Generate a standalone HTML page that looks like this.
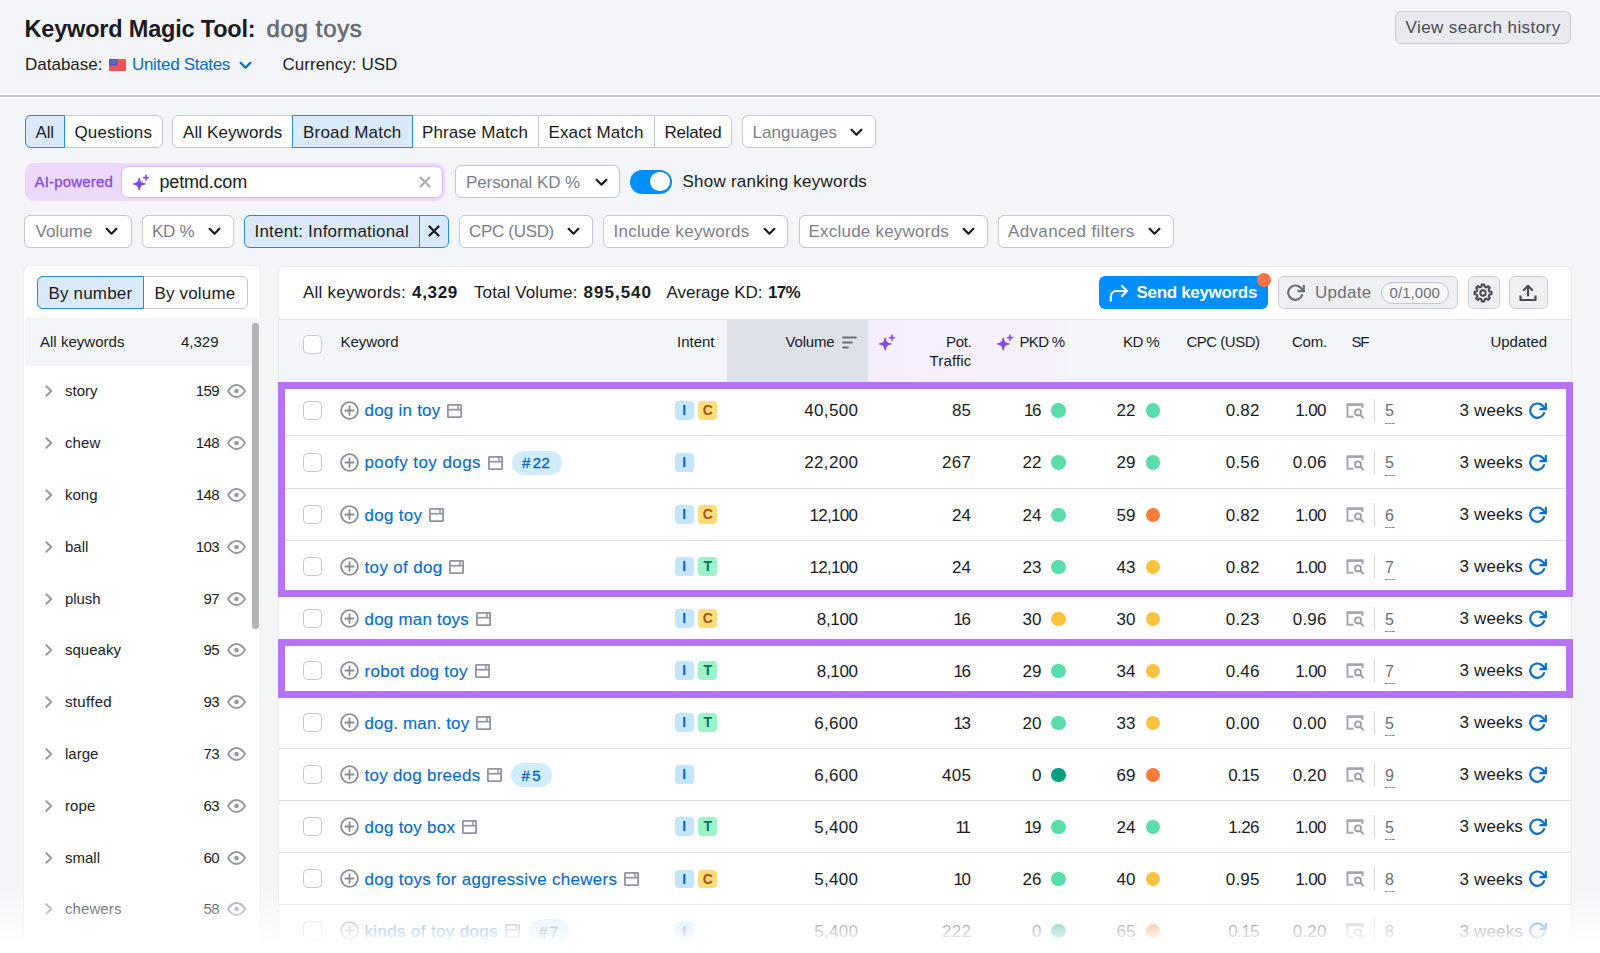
<!DOCTYPE html>
<html><head><meta charset="utf-8"><title>Keyword Magic Tool</title>
<style>
*{box-sizing:border-box;margin:0;padding:0}
html,body{width:1600px;height:953px;overflow:hidden}
body{background:#f4f5f9;font-family:"Liberation Sans",sans-serif;color:#191b23;position:relative;font-size:17px}
.abs,.t{position:absolute}
.t{white-space:nowrap;line-height:20px}
svg{display:block}
#hist{left:1394.500px;top:11.300px;width:176.300px;height:32.500px;border:1px solid #cbced6;border-radius:6px;background:#e9eaef}
#sep{left:0;top:95px;width:1600px;height:2px;background:#c9cbd3}
.pill{position:absolute;height:33px;border:1px solid #c4c7cf;border-radius:6px;background:#fff}
.pill .t{top:6.600px}
.on{position:absolute;background:#dbeafa;border:1px solid #2b8ad6}
.vl{position:absolute;top:0;width:1px;height:31px;background:#c4c7cf}
.dd .t{color:#7c7e89}
.dd .chev{position:absolute;top:11.800px}
#left{left:24.300px;top:266px;width:235.900px;height:700px;background:#fff;box-shadow:0 0 0 1px #eceef3;border-radius:6px}
#left>div{position:absolute;left:1.200px;top:0.500px;width:234px;height:690px}
#right{left:277.500px;top:265.500px;width:1294px;height:700px;background:#fff;border:1px solid #e9eaf0;border-radius:7px}
#thead{left:278.500px;top:318.500px;width:1292px;height:63.500px;background:#f4f5f9;border-top:1px solid #e4e6ec}
.row{position:absolute;left:279px;width:1292px;height:53px;border-top:1px solid #dfe1e9;background:#fff}
.row>*{position:absolute}
.cb{width:19px;height:19px;border:1px solid #c4c7cf;border-radius:4.500px;background:#fff}
.bdg{top:16.800px;width:18.500px;height:18.500px;border-radius:4px;font-size:14px;font-weight:bold;line-height:18.500px;text-align:center}
.bI{background:#c4e5fe;color:#0a62c0}
.bC{background:#fddc7c;color:#a5520a;width:19px}
.bT{background:#9ef2c9;color:#007a5e;width:19px}
.dot{width:14.600px;height:14.600px;border-radius:50%;top:19px}
.tag{height:24px;border-radius:12px;background:#d1ecfd;top:14.500px}
.hl{position:absolute;border:7px solid #b673f8;z-index:5}
.srow{position:absolute;left:0;width:234px;height:52px}
.srow>*{position:absolute}
#fade{left:0;top:886px;width:1600px;height:67px;background:linear-gradient(to bottom,rgba(255,255,255,0) 0px,rgba(255,255,255,1) 59px);z-index:10}
</style></head><body>
<div class="t" style="left:24.500px;top:13.500px;line-height:30px"><span style="font-size:23.5px;font-weight:bold;letter-spacing:-0.19px;margin-right:0.19px;">Keyword Magic Tool:</span></div>
<div class="t" style="left:266.500px;top:13.500px;line-height:30px;color:#666872"><span style="font-size:24px;letter-spacing:0.66px;margin-right:-0.66px;-webkit-text-stroke:0.600px #666872;">dog toys</span></div>
<div class="t " style="top:55.2px;left:25px;"><span style="font-size:17px;">Database:</span></div><svg class="abs" style="left:109px;top:59px" width="17" height="12" viewBox="0 0 17 12"><rect width="17" height="12" rx="0.800" fill="#f25257"/><rect width="8.500" height="6.500" rx="0.500" fill="#4658c8"/><path d="M1.500 2h5M1.500 4h5" stroke="#9aa8ee" stroke-width="0.800" stroke-dasharray="1 1"/></svg>
<div class="t " style="top:55.2px;left:132px;color:#006dca;"><span style="font-size:17px;letter-spacing:-0.31px;margin-right:0.31px;">United States</span></div><svg class="abs" style="left:238.500px;top:61px" width="13" height="9" viewBox="0 0 13 9"><path d="M1.600 1.800 L6.500 6.700 L11.400 1.800" fill="none" stroke="#006dca" stroke-width="2.200" stroke-linecap="round" stroke-linejoin="round"/></svg>
<div class="t " style="top:55.2px;left:282.5px;"><span style="font-size:17px;letter-spacing:0.05px;margin-right:-0.05px;">Currency: USD</span></div><div id="hist" class="abs"></div><div class="t " style="top:17.7px;left:1405.5px;color:#484a54;"><span style="font-size:17px;letter-spacing:0.42px;margin-right:-0.42px;">View search history</span></div>
<div id="sep" class="abs"></div>
<div class="pill " style="left:25px;top:115.4px;width:137.5px;height:33px;"><div class="on" style="left:-1px;top:-1px;width:39.700px;height:33px;border-radius:6px 0 0 6px"></div><div class="t" style="left:9.5px;"><span style="font-size:17px;letter-spacing:-0.14px;margin-right:0.14px;">All</span></div><div class="t" style="left:48.5px;"><span style="font-size:17px;letter-spacing:0.11px;margin-right:-0.11px;">Questions</span></div></div>
<div class="pill " style="left:172px;top:115.4px;width:560px;height:33px;"><div class="on" style="left:119px;top:-1px;width:121px;height:33px"></div><div class="vl" style="left:365px"></div><div class="vl" style="left:480.5px"></div><div class="t" style="left:10px;"><span style="font-size:17px;letter-spacing:0.10px;margin-right:-0.10px;">All Keywords</span></div><div class="t" style="left:130px;"><span style="font-size:17px;letter-spacing:0.19px;margin-right:-0.19px;">Broad Match</span></div><div class="t" style="left:249px;"><span style="font-size:17px;letter-spacing:0.09px;margin-right:-0.09px;">Phrase Match</span></div><div class="t" style="left:375.5px;"><span style="font-size:17px;letter-spacing:0.13px;margin-right:-0.13px;">Exact Match</span></div><div class="t" style="left:491.5px;"><span style="font-size:17px;letter-spacing:-0.23px;margin-right:0.23px;">Related</span></div></div>
<div class="pill dd" style="left:741.5px;top:115.4px;width:134.0px;height:33px;"><div class="t" style="left:10.0px;"><span style="font-size:17px;letter-spacing:0.04px;margin-right:-0.04px;">Languages</span></div><div class="abs" style="left:107.5px;top:0"><svg class="chev" width="13" height="9" viewBox="0 0 13 9"><path d="M1.600 1.800 L6.500 6.700 L11.400 1.800" fill="none" stroke="#191b23" stroke-width="2.200" stroke-linecap="round" stroke-linejoin="round"/></svg></div></div>
<div class="abs" style="left:24.500px;top:163px;width:420.500px;height:37.500px;border-radius:9px;background:#ecd9fc"></div>
<div class="t " style="top:171.9px;left:34.5px;color:#8649e1;"><span style="font-size:15px;letter-spacing:0.18px;margin-right:-0.18px;-webkit-text-stroke:0.300px #8649e1;">AI-powered</span></div><div class="abs" style="left:121px;top:165.500px;width:322px;height:32.500px;border-radius:7px;background:#fff;border:1px solid #dcb8fb"></div>
<div class="abs" style="left:132.500px;top:173.500px"><svg width="17" height="17" viewBox="0 0 17 17"><path d="M6.200 4 C6.900 8.300 7.900 9.300 12.200 10 C7.900 10.700 6.900 11.700 6.200 16 C5.500 11.700 4.500 10.700 0.200 10 C4.500 9.300 5.500 8.300 6.200 4 Z" fill="#8649e1" stroke="#8649e1" stroke-width="1.200" stroke-linejoin="round"/><path d="M13 0.500 C13.350 2.900 13.800 3.350 16.200 3.700 C13.800 4.050 13.350 4.500 13 6.900 C12.650 4.500 12.200 4.050 9.800 3.700 C12.200 3.350 12.650 2.900 13 0.500 Z" fill="#8649e1" stroke="#8649e1" stroke-width="0.800" stroke-linejoin="round"/></svg></div>
<div class="t " style="top:172.1px;left:159.5px;"><span style="font-size:18px;letter-spacing:-0.17px;margin-right:0.17px;">petmd.com</span></div><div class="abs" style="left:418.500px;top:176px"><svg width="12" height="12" viewBox="0 0 12 12"><path d="M1.500 1.500 L10.500 10.500 M10.500 1.500 L1.500 10.500" stroke="#a9abb6" stroke-width="2.1" stroke-linecap="round"/></svg></div>
<div class="pill dd" style="left:455px;top:165.3px;width:165px;height:33px;"><div class="t" style="left:10px;"><span style="font-size:17px;letter-spacing:-0.10px;margin-right:0.10px;">Personal KD %</span></div><div class="abs" style="left:138.5px;top:0"><svg class="chev" width="13" height="9" viewBox="0 0 13 9"><path d="M1.600 1.800 L6.500 6.700 L11.400 1.800" fill="none" stroke="#191b23" stroke-width="2.200" stroke-linecap="round" stroke-linejoin="round"/></svg></div></div>
<div class="abs" style="left:630px;top:169.500px;width:42px;height:24px;border-radius:12px;background:#008ff8"><div class="abs" style="right:2.200px;top:2.200px;width:19.600px;height:19.600px;border-radius:50%;background:#fff"></div></div>
<div class="t " style="top:172.1px;left:682.5px;"><span style="font-size:17px;letter-spacing:0.24px;margin-right:-0.24px;">Show ranking keywords</span></div><div class="pill dd" style="left:24.3px;top:214.5px;width:107.60000000000001px;height:33px;"><div class="t" style="left:10.2px;"><span style="font-size:17px;letter-spacing:0.05px;margin-right:-0.05px;">Volume</span></div><div class="abs" style="left:80.2px;top:0"><svg class="chev" width="13" height="9" viewBox="0 0 13 9"><path d="M1.600 1.800 L6.500 6.700 L11.400 1.800" fill="none" stroke="#191b23" stroke-width="2.200" stroke-linecap="round" stroke-linejoin="round"/></svg></div></div>
<div class="pill dd" style="left:141.5px;top:214.5px;width:92.5px;height:33px;"><div class="t" style="left:9.5px;"><span style="font-size:17px;letter-spacing:-0.24px;margin-right:0.24px;">KD %</span></div><div class="abs" style="left:65.5px;top:0"><svg class="chev" width="13" height="9" viewBox="0 0 13 9"><path d="M1.600 1.800 L6.500 6.700 L11.400 1.800" fill="none" stroke="#191b23" stroke-width="2.200" stroke-linecap="round" stroke-linejoin="round"/></svg></div></div>
<div class="pill " style="left:243.5px;top:214.5px;width:205.5px;height:33px;background:#dbeafa;border-color:#2b8ad6"><div class="t" style="left:10.0px;"><span style="font-size:17px;letter-spacing:0.20px;margin-right:-0.20px;">Intent: Informational</span></div><div class="abs" style="left:174.500px;top:-1px;width:1.200px;height:33px;background:#2b8ad6"></div><div class="abs" style="left:183px;top:9.500px"><svg width="12" height="12" viewBox="0 0 12 12"><path d="M1.500 1.500 L10.500 10.500 M10.500 1.500 L1.500 10.500" stroke="#191b23" stroke-width="2.3" stroke-linecap="round"/></svg></div></div>
<div class="pill dd" style="left:458.5px;top:214.5px;width:134.5px;height:33px;"><div class="t" style="left:9.5px;"><span style="font-size:17px;letter-spacing:-0.32px;margin-right:0.32px;">CPC (USD)</span></div><div class="abs" style="left:107.5px;top:0"><svg class="chev" width="13" height="9" viewBox="0 0 13 9"><path d="M1.600 1.800 L6.500 6.700 L11.400 1.800" fill="none" stroke="#191b23" stroke-width="2.200" stroke-linecap="round" stroke-linejoin="round"/></svg></div></div>
<div class="pill dd" style="left:603px;top:214.5px;width:185px;height:33px;"><div class="t" style="left:9.5px;"><span style="font-size:17px;letter-spacing:0.29px;margin-right:-0.29px;">Include keywords</span></div><div class="abs" style="left:158.5px;top:0"><svg class="chev" width="13" height="9" viewBox="0 0 13 9"><path d="M1.600 1.800 L6.500 6.700 L11.400 1.800" fill="none" stroke="#191b23" stroke-width="2.200" stroke-linecap="round" stroke-linejoin="round"/></svg></div></div>
<div class="pill dd" style="left:798.5px;top:214.5px;width:189.0px;height:33px;"><div class="t" style="left:9.0px;"><span style="font-size:17px;letter-spacing:0.22px;margin-right:-0.22px;">Exclude keywords</span></div><div class="abs" style="left:162.0px;top:0"><svg class="chev" width="13" height="9" viewBox="0 0 13 9"><path d="M1.600 1.800 L6.500 6.700 L11.400 1.800" fill="none" stroke="#191b23" stroke-width="2.200" stroke-linecap="round" stroke-linejoin="round"/></svg></div></div>
<div class="pill dd" style="left:997.5px;top:214.5px;width:176.0px;height:33px;"><div class="t" style="left:9.5px;"><span style="font-size:17px;letter-spacing:0.35px;margin-right:-0.35px;">Advanced filters</span></div><div class="abs" style="left:149.0px;top:0"><svg class="chev" width="13" height="9" viewBox="0 0 13 9"><path d="M1.600 1.800 L6.500 6.700 L11.400 1.800" fill="none" stroke="#191b23" stroke-width="2.200" stroke-linecap="round" stroke-linejoin="round"/></svg></div></div>
<div id="left" class="abs"><div><div class="pill " style="left:11.9px;top:9.6px;width:210.6px;height:33px;"><div class="on" style="left:-1px;top:-1px;width:106.500px;height:33px;border-radius:6px 0 0 6px"></div><div class="t" style="left:10.0px;"><span style="font-size:17px;letter-spacing:0.20px;margin-right:-0.20px;">By number</span></div><div class="t" style="left:116.0px;"><span style="font-size:17px;letter-spacing:0.18px;margin-right:-0.18px;">By volume</span></div></div>
<div class="abs" style="left:0;top:51.900px;width:234px;height:47.700px;background:#f4f5f9"></div><div class="t" style="left:14.500px;top:65.800px"><span style="font-size:15px;letter-spacing:0.02px;margin-right:-0.02px;">All keywords</span></div><div class="t" style="right:41.0px;top:65.800px"><span style="font-size:15px;letter-spacing:-0.01px;margin-right:0.01px;">4,329</span></div><div class="abs" style="left:226.900px;top:56.800px;width:6.300px;height:306px;border-radius:3.200px;background:#b3b3b6"></div><div class="srow" style="top:98.8px"><div style="left:19.900px;top:20px"><svg width="8" height="12" viewBox="0 0 8 12"><path d="M1.400 1.200 L6.300 6 L1.400 10.800" fill="none" stroke="#9699a5" stroke-width="1.900" stroke-linecap="round" stroke-linejoin="round"/></svg></div><div class="t" style="left:39.500px;top:16px"><span style="font-size:15px;">story</span></div><div class="t" style="right:40px;top:16px"><span style="font-size:15px;letter-spacing:-0.68px;margin-right:0.68px;">159</span></div><div style="left:201.500px;top:19px"><svg width="19" height="14" viewBox="0 0 19 14"><path d="M1 7 C3.500 2.800 6.500 1 9.500 1 C12.500 1 15.500 2.800 18 7 C15.500 11.200 12.500 13 9.500 13 C6.500 13 3.500 11.200 1 7 Z" fill="none" stroke="#9699a5" stroke-width="1.800"/><circle cx="9.500" cy="7" r="2.300" fill="#9699a5"/></svg></div></div><div class="srow" style="top:150.6px"><div style="left:19.900px;top:20px"><svg width="8" height="12" viewBox="0 0 8 12"><path d="M1.400 1.200 L6.300 6 L1.400 10.800" fill="none" stroke="#9699a5" stroke-width="1.900" stroke-linecap="round" stroke-linejoin="round"/></svg></div><div class="t" style="left:39.500px;top:16px"><span style="font-size:15px;letter-spacing:0.12px;margin-right:-0.12px;">chew</span></div><div class="t" style="right:40px;top:16px"><span style="font-size:15px;letter-spacing:-0.68px;margin-right:0.68px;">148</span></div><div style="left:201.500px;top:19px"><svg width="19" height="14" viewBox="0 0 19 14"><path d="M1 7 C3.500 2.800 6.500 1 9.500 1 C12.500 1 15.500 2.800 18 7 C15.500 11.200 12.500 13 9.500 13 C6.500 13 3.500 11.200 1 7 Z" fill="none" stroke="#9699a5" stroke-width="1.800"/><circle cx="9.500" cy="7" r="2.300" fill="#9699a5"/></svg></div></div><div class="srow" style="top:202.4px"><div style="left:19.900px;top:20px"><svg width="8" height="12" viewBox="0 0 8 12"><path d="M1.400 1.200 L6.300 6 L1.400 10.800" fill="none" stroke="#9699a5" stroke-width="1.900" stroke-linecap="round" stroke-linejoin="round"/></svg></div><div class="t" style="left:39.500px;top:16px"><span style="font-size:15px;letter-spacing:-0.01px;margin-right:0.01px;">kong</span></div><div class="t" style="right:40px;top:16px"><span style="font-size:15px;letter-spacing:-0.68px;margin-right:0.68px;">148</span></div><div style="left:201.500px;top:19px"><svg width="19" height="14" viewBox="0 0 19 14"><path d="M1 7 C3.500 2.800 6.500 1 9.500 1 C12.500 1 15.500 2.800 18 7 C15.500 11.200 12.500 13 9.500 13 C6.500 13 3.500 11.200 1 7 Z" fill="none" stroke="#9699a5" stroke-width="1.800"/><circle cx="9.500" cy="7" r="2.300" fill="#9699a5"/></svg></div></div><div class="srow" style="top:254.2px"><div style="left:19.900px;top:20px"><svg width="8" height="12" viewBox="0 0 8 12"><path d="M1.400 1.200 L6.300 6 L1.400 10.800" fill="none" stroke="#9699a5" stroke-width="1.900" stroke-linecap="round" stroke-linejoin="round"/></svg></div><div class="t" style="left:39.500px;top:16px"><span style="font-size:15px;letter-spacing:0.04px;margin-right:-0.04px;">ball</span></div><div class="t" style="right:40px;top:16px"><span style="font-size:15px;letter-spacing:-0.68px;margin-right:0.68px;">103</span></div><div style="left:201.500px;top:19px"><svg width="19" height="14" viewBox="0 0 19 14"><path d="M1 7 C3.500 2.800 6.500 1 9.500 1 C12.500 1 15.500 2.800 18 7 C15.500 11.200 12.500 13 9.500 13 C6.500 13 3.500 11.200 1 7 Z" fill="none" stroke="#9699a5" stroke-width="1.800"/><circle cx="9.500" cy="7" r="2.300" fill="#9699a5"/></svg></div></div><div class="srow" style="top:306.0px"><div style="left:19.900px;top:20px"><svg width="8" height="12" viewBox="0 0 8 12"><path d="M1.400 1.200 L6.300 6 L1.400 10.800" fill="none" stroke="#9699a5" stroke-width="1.900" stroke-linecap="round" stroke-linejoin="round"/></svg></div><div class="t" style="left:39.500px;top:16px"><span style="font-size:15px;letter-spacing:-0.07px;margin-right:0.07px;">plush</span></div><div class="t" style="right:40px;top:16px"><span style="font-size:15px;letter-spacing:-0.59px;margin-right:0.59px;">97</span></div><div style="left:201.500px;top:19px"><svg width="19" height="14" viewBox="0 0 19 14"><path d="M1 7 C3.500 2.800 6.500 1 9.500 1 C12.500 1 15.500 2.800 18 7 C15.500 11.200 12.500 13 9.500 13 C6.500 13 3.500 11.200 1 7 Z" fill="none" stroke="#9699a5" stroke-width="1.800"/><circle cx="9.500" cy="7" r="2.300" fill="#9699a5"/></svg></div></div><div class="srow" style="top:357.8px"><div style="left:19.900px;top:20px"><svg width="8" height="12" viewBox="0 0 8 12"><path d="M1.400 1.200 L6.300 6 L1.400 10.800" fill="none" stroke="#9699a5" stroke-width="1.900" stroke-linecap="round" stroke-linejoin="round"/></svg></div><div class="t" style="left:39.500px;top:16px"><span style="font-size:15px;letter-spacing:0.02px;margin-right:-0.02px;">squeaky</span></div><div class="t" style="right:40px;top:16px"><span style="font-size:15px;letter-spacing:-0.59px;margin-right:0.59px;">95</span></div><div style="left:201.500px;top:19px"><svg width="19" height="14" viewBox="0 0 19 14"><path d="M1 7 C3.500 2.800 6.500 1 9.500 1 C12.500 1 15.500 2.800 18 7 C15.500 11.200 12.500 13 9.500 13 C6.500 13 3.500 11.200 1 7 Z" fill="none" stroke="#9699a5" stroke-width="1.800"/><circle cx="9.500" cy="7" r="2.300" fill="#9699a5"/></svg></div></div><div class="srow" style="top:409.6px"><div style="left:19.900px;top:20px"><svg width="8" height="12" viewBox="0 0 8 12"><path d="M1.400 1.200 L6.300 6 L1.400 10.800" fill="none" stroke="#9699a5" stroke-width="1.900" stroke-linecap="round" stroke-linejoin="round"/></svg></div><div class="t" style="left:39.500px;top:16px"><span style="font-size:15px;letter-spacing:0.32px;margin-right:-0.32px;">stuffed</span></div><div class="t" style="right:40px;top:16px"><span style="font-size:15px;letter-spacing:-0.59px;margin-right:0.59px;">93</span></div><div style="left:201.500px;top:19px"><svg width="19" height="14" viewBox="0 0 19 14"><path d="M1 7 C3.500 2.800 6.500 1 9.500 1 C12.500 1 15.500 2.800 18 7 C15.500 11.200 12.500 13 9.500 13 C6.500 13 3.500 11.200 1 7 Z" fill="none" stroke="#9699a5" stroke-width="1.800"/><circle cx="9.500" cy="7" r="2.300" fill="#9699a5"/></svg></div></div><div class="srow" style="top:461.4px"><div style="left:19.900px;top:20px"><svg width="8" height="12" viewBox="0 0 8 12"><path d="M1.400 1.200 L6.300 6 L1.400 10.800" fill="none" stroke="#9699a5" stroke-width="1.900" stroke-linecap="round" stroke-linejoin="round"/></svg></div><div class="t" style="left:39.500px;top:16px"><span style="font-size:15px;letter-spacing:0.03px;margin-right:-0.03px;">large</span></div><div class="t" style="right:40px;top:16px"><span style="font-size:15px;letter-spacing:-0.59px;margin-right:0.59px;">73</span></div><div style="left:201.500px;top:19px"><svg width="19" height="14" viewBox="0 0 19 14"><path d="M1 7 C3.500 2.800 6.500 1 9.500 1 C12.500 1 15.500 2.800 18 7 C15.500 11.200 12.500 13 9.500 13 C6.500 13 3.500 11.200 1 7 Z" fill="none" stroke="#9699a5" stroke-width="1.800"/><circle cx="9.500" cy="7" r="2.300" fill="#9699a5"/></svg></div></div><div class="srow" style="top:513.2px"><div style="left:19.900px;top:20px"><svg width="8" height="12" viewBox="0 0 8 12"><path d="M1.400 1.200 L6.300 6 L1.400 10.800" fill="none" stroke="#9699a5" stroke-width="1.900" stroke-linecap="round" stroke-linejoin="round"/></svg></div><div class="t" style="left:39.500px;top:16px"><span style="font-size:15px;letter-spacing:0.12px;margin-right:-0.12px;">rope</span></div><div class="t" style="right:40px;top:16px"><span style="font-size:15px;letter-spacing:-0.59px;margin-right:0.59px;">63</span></div><div style="left:201.500px;top:19px"><svg width="19" height="14" viewBox="0 0 19 14"><path d="M1 7 C3.500 2.800 6.500 1 9.500 1 C12.500 1 15.500 2.800 18 7 C15.500 11.200 12.500 13 9.500 13 C6.500 13 3.500 11.200 1 7 Z" fill="none" stroke="#9699a5" stroke-width="1.800"/><circle cx="9.500" cy="7" r="2.300" fill="#9699a5"/></svg></div></div><div class="srow" style="top:565.0px"><div style="left:19.900px;top:20px"><svg width="8" height="12" viewBox="0 0 8 12"><path d="M1.400 1.200 L6.300 6 L1.400 10.800" fill="none" stroke="#9699a5" stroke-width="1.900" stroke-linecap="round" stroke-linejoin="round"/></svg></div><div class="t" style="left:39.500px;top:16px"><span style="font-size:15px;">small</span></div><div class="t" style="right:40px;top:16px"><span style="font-size:15px;letter-spacing:-0.59px;margin-right:0.59px;">60</span></div><div style="left:201.500px;top:19px"><svg width="19" height="14" viewBox="0 0 19 14"><path d="M1 7 C3.500 2.800 6.500 1 9.500 1 C12.500 1 15.500 2.800 18 7 C15.500 11.200 12.500 13 9.500 13 C6.500 13 3.500 11.200 1 7 Z" fill="none" stroke="#9699a5" stroke-width="1.800"/><circle cx="9.500" cy="7" r="2.300" fill="#9699a5"/></svg></div></div><div class="srow" style="top:616.8px"><div style="left:19.900px;top:20px"><svg width="8" height="12" viewBox="0 0 8 12"><path d="M1.400 1.200 L6.300 6 L1.400 10.800" fill="none" stroke="#9699a5" stroke-width="1.900" stroke-linecap="round" stroke-linejoin="round"/></svg></div><div class="t" style="left:39.500px;top:16px"><span style="font-size:15px;letter-spacing:0.09px;margin-right:-0.09px;">chewers</span></div><div class="t" style="right:40px;top:16px"><span style="font-size:15px;letter-spacing:-0.59px;margin-right:0.59px;">58</span></div><div style="left:201.500px;top:19px"><svg width="19" height="14" viewBox="0 0 19 14"><path d="M1 7 C3.500 2.800 6.500 1 9.500 1 C12.500 1 15.500 2.800 18 7 C15.500 11.200 12.500 13 9.500 13 C6.500 13 3.500 11.200 1 7 Z" fill="none" stroke="#9699a5" stroke-width="1.800"/><circle cx="9.500" cy="7" r="2.300" fill="#9699a5"/></svg></div></div></div></div>
<div id="right" class="abs"></div>
<div class="t " style="top:282.5px;left:303px;"><span style="font-size:17px;letter-spacing:0.22px;margin-right:-0.22px;">All keywords:</span></div><div class="t " style="top:282.5px;left:412px;"><span style="font-size:17px;font-weight:bold;letter-spacing:0.69px;margin-right:-0.69px;">4,329</span></div><div class="t " style="top:282.5px;left:474px;"><span style="font-size:17px;letter-spacing:0.11px;margin-right:-0.11px;">Total Volume:</span></div><div class="t " style="top:282.5px;left:583.5px;"><span style="font-size:17px;font-weight:bold;letter-spacing:1.01px;margin-right:-1.01px;">895,540</span></div><div class="t " style="top:282.5px;left:666.5px;"><span style="font-size:17px;letter-spacing:-0.01px;margin-right:0.01px;">Average KD:</span></div><div class="t " style="top:282.5px;left:768px;"><span style="font-size:17px;font-weight:bold;letter-spacing:-0.68px;margin-right:0.68px;">17%</span></div>
<div class="abs" style="left:1099px;top:276px;width:169px;height:33px;border-radius:6px;background:#008ff8"></div>
<div class="t " style="top:282.5px;left:1136.5px;color:#fff;"><span style="font-size:17px;font-weight:bold;letter-spacing:-0.32px;margin-right:0.32px;">Send keywords</span></div><svg class="abs" style="left:1108.500px;top:283.500px" width="20" height="18" viewBox="0 0 20 18"><path d="M1.800 16.500 V13 C1.800 9.500 4 7 7.500 7 H17" fill="none" stroke="#fff" stroke-width="2.200" stroke-linecap="round" stroke-linejoin="round"/><path d="M13 2 L18 7 L13 12" fill="none" stroke="#fff" stroke-width="2.200" stroke-linecap="round" stroke-linejoin="round"/></svg>
<div class="abs" style="left:1256.500px;top:273.300px;width:14px;height:14px;border-radius:50%;background:#ff7345"></div>
<div class="abs" style="left:1277.500px;top:276px;width:180px;height:33px;border-radius:6px;background:#eff0f4;border:1px solid #cbced6"></div>
<div class="t " style="top:282.5px;left:1315px;color:#6c6e79;"><span style="font-size:17px;letter-spacing:0.28px;margin-right:-0.28px;">Update</span></div><div class="abs" style="left:1286.400px;top:282.500px"><svg width="19" height="19" viewBox="0 0 24 24" fill="none" stroke="#6c6e79" stroke-width="2.800" stroke-linecap="round" stroke-linejoin="round"><path d="M22.500 3.500 V10.300 H15.700"/><path d="M20.300 15.200 A9 9 0 1 1 18.200 5.800 L22.500 10.300"/></svg></div>
<div class="abs" style="left:1381px;top:281.500px;width:68px;height:22.500px;border-radius:12px;border:1px solid #c4c7cf;background:#f8f8fa"></div>
<div class="t " style="top:282.5px;left:1389.5px;color:#6c6e79;"><span style="font-size:15px;letter-spacing:0.06px;margin-right:-0.06px;">0/1,000</span></div><div class="abs" style="left:1467.500px;top:276px;width:32px;height:33px;border-radius:6px;background:#eff0f4;border:1px solid #cbced6"></div>
<div class="abs" style="left:1509px;top:276px;width:38.500px;height:33px;border-radius:6px;background:#eff0f4;border:1px solid #cbced6"></div>
<div class="abs" style="left:1473.300px;top:282.900px"><svg width="20" height="20" viewBox="0 0 20 20"><path d="M8.48 3.68 L8.65 1.51 L11.35 1.51 L11.52 3.68 L13.40 4.46 L15.05 3.04 L16.96 4.95 L15.54 6.60 L16.32 8.48 L18.49 8.65 L18.49 11.35 L16.32 11.52 L15.54 13.40 L16.96 15.05 L15.05 16.96 L13.40 15.54 L11.52 16.32 L11.35 18.49 L8.65 18.49 L8.48 16.32 L6.60 15.54 L4.95 16.96 L3.04 15.05 L4.46 13.40 L3.68 11.52 L1.51 11.35 L1.51 8.65 L3.68 8.48 L4.46 6.60 L3.04 4.95 L4.95 3.04 L6.60 4.46 Z" fill="none" stroke="#484a54" stroke-width="2" stroke-linejoin="round"/><circle cx="10" cy="10" r="2.700" fill="none" stroke="#484a54" stroke-width="2"/></svg></div>
<svg class="abs" style="left:1519px;top:284px" width="18" height="18" viewBox="0 0 18 18"><path d="M9 11.500 V2.500 M4.800 6 L9 1.800 L13.200 6" fill="none" stroke="#484a54" stroke-width="2.200" stroke-linecap="round" stroke-linejoin="round"/><path d="M1.500 11.500 V16 H16.500 V11.500" fill="none" stroke="#484a54" stroke-width="2.200" stroke-linejoin="round"/></svg>
<div id="thead" class="abs"><div class="abs" style="left:448px;top:0;width:141px;height:63px;background:#dfe1e8"></div><div class="abs" style="left:589px;top:0;width:209px;height:63px;background:linear-gradient(to right,#f6eefd 0%,#f7f1fd 85%,#f4f5f9 100%)"></div><div class="cb abs" style="left:24.300px;top:15.300px"></div></div>
<div class="t " style="top:331.5px;left:340.5px;"><span style="font-size:15px;letter-spacing:-0.05px;margin-right:0.05px;">Keyword</span></div><div class="t " style="top:331.5px;left:677px;"><span style="font-size:15px;letter-spacing:-0.01px;margin-right:0.01px;">Intent</span></div><div class="t " style="top:331.5px;left:785.5px;"><span style="font-size:15px;letter-spacing:-0.17px;margin-right:0.17px;">Volume</span></div><svg class="abs" style="left:841.500px;top:335.500px" width="15" height="13" viewBox="0 0 15 13"><path d="M1.200 1.500h12.600M1.200 6.500h8.600M1.200 11.500h4.600" stroke="#6c6e79" stroke-width="2.100" stroke-linecap="round"/></svg><div class="abs" style="left:878.500px;top:333.500px"><svg width="17" height="17" viewBox="0 0 17 17"><path d="M6.200 4 C6.900 8.300 7.900 9.300 12.200 10 C7.900 10.700 6.900 11.700 6.200 16 C5.500 11.700 4.500 10.700 0.200 10 C4.500 9.300 5.500 8.300 6.200 4 Z" fill="#8649e1" stroke="#8649e1" stroke-width="1.200" stroke-linejoin="round"/><path d="M13 0.500 C13.350 2.900 13.800 3.350 16.200 3.700 C13.800 4.050 13.350 4.500 13 6.900 C12.650 4.500 12.200 4.050 9.800 3.700 C12.200 3.350 12.650 2.900 13 0.500 Z" fill="#8649e1" stroke="#8649e1" stroke-width="0.800" stroke-linejoin="round"/></svg></div><div class="t " style="top:331.5px;left:946px;"><span style="font-size:15px;letter-spacing:-0.30px;margin-right:0.30px;">Pot.</span></div><div class="t " style="top:350.7px;left:929.5px;"><span style="font-size:15px;letter-spacing:0.17px;margin-right:-0.17px;">Traffic</span></div><div class="abs" style="left:997px;top:333.500px"><svg width="17" height="17" viewBox="0 0 17 17"><path d="M6.200 4 C6.900 8.300 7.900 9.300 12.200 10 C7.900 10.700 6.900 11.700 6.200 16 C5.500 11.700 4.500 10.700 0.200 10 C4.500 9.300 5.500 8.300 6.200 4 Z" fill="#8649e1" stroke="#8649e1" stroke-width="1.200" stroke-linejoin="round"/><path d="M13 0.500 C13.350 2.900 13.800 3.350 16.200 3.700 C13.800 4.050 13.350 4.500 13 6.900 C12.650 4.500 12.200 4.050 9.800 3.700 C12.200 3.350 12.650 2.900 13 0.500 Z" fill="#8649e1" stroke="#8649e1" stroke-width="0.800" stroke-linejoin="round"/></svg></div><div class="t " style="top:331.5px;left:1019.5px;"><span style="font-size:15px;letter-spacing:-0.67px;margin-right:0.67px;">PKD %</span></div><div class="t " style="top:331.5px;left:1123px;"><span style="font-size:15px;letter-spacing:-0.59px;margin-right:0.59px;">KD %</span></div><div class="t " style="top:331.5px;left:1186.5px;"><span style="font-size:15px;letter-spacing:-0.50px;margin-right:0.50px;">CPC (USD)</span></div><div class="t " style="top:331.5px;left:1292px;"><span style="font-size:15px;letter-spacing:-0.21px;margin-right:0.21px;">Com.</span></div><div class="t " style="top:331.5px;left:1351.5px;"><span style="font-size:15px;letter-spacing:-1.34px;margin-right:1.34px;">SF</span></div><div class="t " style="top:331.5px;left:1490.5px;"><span style="font-size:15px;letter-spacing:-0.03px;margin-right:0.03px;">Updated</span></div>
<div class="row" style="top:383.4px"><div class="cb" style="left:23.500px;top:16.700px"></div><div style="left:61.300px;top:16.600px"><svg width="19" height="19" viewBox="0 0 19 19"><circle cx="9.500" cy="9.500" r="8.400" fill="none" stroke="#8b8e9a" stroke-width="1.900"/><path d="M9.500 5.300v8.400M5.300 9.500h8.400" stroke="#8b8e9a" stroke-width="1.900" stroke-linecap="round"/></svg></div><div class="t" style="left:85.500px;top:17.100px;color:#0a6cc9"><span style="font-size:17px;letter-spacing:0.23px;margin-right:-0.23px;-webkit-text-stroke:0.150px #0a6cc9;">dog in toy</span></div><div style="left:168.1px;top:19.300px"><svg width="15" height="14" viewBox="0 0 15 14"><rect x="0.900" y="0.900" width="13.200" height="12.200" rx="0.400" fill="none" stroke="#9295a1" stroke-width="1.800"/><path d="M1 5.700h13" stroke="#9295a1" stroke-width="1.700"/><path d="M11 1v4.500" stroke="#9295a1" stroke-width="1.500"/></svg></div><div class="bdg bI" style="left:396px">I</div><div class="bdg bC" style="left:419.3px">C</div><div class="t" style="right:713px;top:17px;"><span style="font-size:17px;letter-spacing:0.36px;margin-right:-0.36px;">40,500</span></div><div class="t" style="right:600px;top:17px;"><span style="font-size:17px;letter-spacing:0.19px;margin-right:-0.19px;">85</span></div><div class="t" style="right:529.5px;top:17px;"><span style="font-size:17px;letter-spacing:-1.44px;margin-right:1.44px;">16</span></div><div class="dot" style="left:772.3px;background:#59ddaa"></div><div class="t" style="right:435.5px;top:17px;"><span style="font-size:17px;letter-spacing:0.19px;margin-right:-0.19px;">22</span></div><div class="dot" style="left:866.5px;background:#59ddaa"></div><div class="t" style="right:311.5px;top:17px;"><span style="font-size:17px;letter-spacing:0.24px;margin-right:-0.24px;">0.82</span></div><div class="t" style="right:244.5px;top:17px;"><span style="font-size:17px;letter-spacing:-0.57px;margin-right:0.57px;">1.00</span></div><div style="left:1067px;top:18.500px"><svg width="19" height="16" viewBox="0 0 19 16"><path d="M7.500 13.800 H1.500 V1.500 H16.500 V5" fill="none" stroke="#a3a6b1" stroke-width="1.900" stroke-linejoin="miter"/><path d="M0.600 1.700 H17.400" stroke="#a3a6b1" stroke-width="2.400"/><circle cx="12" cy="9.400" r="3" fill="none" stroke="#9a9da9" stroke-width="1.800"/><path d="M14.300 11.700 L17 14.500" stroke="#9a9da9" stroke-width="1.900" stroke-linecap="round"/></svg></div><div style="left:1095.3px;top:14.500px;width:1.200px;height:23px;background:#d1d4db"></div><div class="t" style="left:1106px;top:17.100px;color:#6c6e79"><span style="font-size:16px;letter-spacing:0.49px;margin-right:-0.49px;">5</span></div><div style="left:1106px;top:38.500px;width:10px;height:0;border-top:1.500px dashed #8a8e9b"></div><div class="t" style="left:1180.5px;top:16.800px"><span style="font-size:17px;letter-spacing:0.16px;margin-right:-0.16px;">3 weeks</span></div><div style="left:1249.3px;top:16.300px"><svg width="19" height="19" viewBox="0 0 24 24" fill="none" stroke="#0a6cc9" stroke-width="2.800" stroke-linecap="round" stroke-linejoin="round"><path d="M22.500 3.500 V10.300 H15.700"/><path d="M20.300 15.200 A9 9 0 1 1 18.200 5.800 L22.500 10.300"/></svg></div></div>
<div class="row" style="top:435.4px"><div class="cb" style="left:23.500px;top:16.700px"></div><div style="left:61.300px;top:16.600px"><svg width="19" height="19" viewBox="0 0 19 19"><circle cx="9.500" cy="9.500" r="8.400" fill="none" stroke="#8b8e9a" stroke-width="1.900"/><path d="M9.500 5.300v8.400M5.300 9.500h8.400" stroke="#8b8e9a" stroke-width="1.900" stroke-linecap="round"/></svg></div><div class="t" style="left:85.500px;top:17.100px;color:#0a6cc9"><span style="font-size:17px;letter-spacing:0.42px;margin-right:-0.42px;-webkit-text-stroke:0.150px #0a6cc9;">poofy toy dogs</span></div><div style="left:208.6px;top:19.300px"><svg width="15" height="14" viewBox="0 0 15 14"><rect x="0.900" y="0.900" width="13.200" height="12.200" rx="0.400" fill="none" stroke="#9295a1" stroke-width="1.800"/><path d="M1 5.700h13" stroke="#9295a1" stroke-width="1.700"/><path d="M11 1v4.500" stroke="#9295a1" stroke-width="1.500"/></svg></div><div class="tag" style="left:232.5px;width:50px"></div><div class="t" style="left:243.0px;top:17px;color:#0a62c0"><span style="font-size:15px;letter-spacing:0.66px;margin-right:-0.66px;-webkit-text-stroke:0.350px #0a62c0;">#</span><span style="display:inline-block;width:2.500px"></span><span style="font-size:15px;letter-spacing:0.41px;margin-right:-0.41px;-webkit-text-stroke:0.350px #0a62c0;">22</span></div><div class="bdg bI" style="left:396px">I</div><div class="t" style="right:713px;top:17px;"><span style="font-size:17px;letter-spacing:0.36px;margin-right:-0.36px;">22,200</span></div><div class="t" style="right:600px;top:17px;"><span style="font-size:17px;letter-spacing:0.33px;margin-right:-0.33px;">267</span></div><div class="t" style="right:529.5px;top:17px;"><span style="font-size:17px;letter-spacing:0.19px;margin-right:-0.19px;">22</span></div><div class="dot" style="left:772.3px;background:#59ddaa"></div><div class="t" style="right:435.5px;top:17px;"><span style="font-size:17px;letter-spacing:0.19px;margin-right:-0.19px;">29</span></div><div class="dot" style="left:866.5px;background:#59ddaa"></div><div class="t" style="right:311.5px;top:17px;"><span style="font-size:17px;letter-spacing:0.24px;margin-right:-0.24px;">0.56</span></div><div class="t" style="right:244.5px;top:17px;"><span style="font-size:17px;letter-spacing:0.24px;margin-right:-0.24px;">0.06</span></div><div style="left:1067px;top:18.500px"><svg width="19" height="16" viewBox="0 0 19 16"><path d="M7.500 13.800 H1.500 V1.500 H16.500 V5" fill="none" stroke="#a3a6b1" stroke-width="1.900" stroke-linejoin="miter"/><path d="M0.600 1.700 H17.400" stroke="#a3a6b1" stroke-width="2.400"/><circle cx="12" cy="9.400" r="3" fill="none" stroke="#9a9da9" stroke-width="1.800"/><path d="M14.300 11.700 L17 14.500" stroke="#9a9da9" stroke-width="1.900" stroke-linecap="round"/></svg></div><div style="left:1095.3px;top:14.500px;width:1.200px;height:23px;background:#d1d4db"></div><div class="t" style="left:1106px;top:17.100px;color:#6c6e79"><span style="font-size:16px;letter-spacing:0.49px;margin-right:-0.49px;">5</span></div><div style="left:1106px;top:38.500px;width:10px;height:0;border-top:1.500px dashed #8a8e9b"></div><div class="t" style="left:1180.5px;top:16.800px"><span style="font-size:17px;letter-spacing:0.16px;margin-right:-0.16px;">3 weeks</span></div><div style="left:1249.3px;top:16.300px"><svg width="19" height="19" viewBox="0 0 24 24" fill="none" stroke="#0a6cc9" stroke-width="2.800" stroke-linecap="round" stroke-linejoin="round"><path d="M22.500 3.500 V10.300 H15.700"/><path d="M20.300 15.200 A9 9 0 1 1 18.200 5.800 L22.500 10.300"/></svg></div></div>
<div class="row" style="top:487.5px"><div class="cb" style="left:23.500px;top:16.700px"></div><div style="left:61.300px;top:16.600px"><svg width="19" height="19" viewBox="0 0 19 19"><circle cx="9.500" cy="9.500" r="8.400" fill="none" stroke="#8b8e9a" stroke-width="1.900"/><path d="M9.500 5.300v8.400M5.300 9.500h8.400" stroke="#8b8e9a" stroke-width="1.900" stroke-linecap="round"/></svg></div><div class="t" style="left:85.500px;top:17.100px;color:#0a6cc9"><span style="font-size:17px;letter-spacing:0.28px;margin-right:-0.28px;-webkit-text-stroke:0.150px #0a6cc9;">dog toy</span></div><div style="left:149.79999999999998px;top:19.300px"><svg width="15" height="14" viewBox="0 0 15 14"><rect x="0.900" y="0.900" width="13.200" height="12.200" rx="0.400" fill="none" stroke="#9295a1" stroke-width="1.800"/><path d="M1 5.700h13" stroke="#9295a1" stroke-width="1.700"/><path d="M11 1v4.500" stroke="#9295a1" stroke-width="1.500"/></svg></div><div class="bdg bI" style="left:396px">I</div><div class="bdg bC" style="left:419.3px">C</div><div class="t" style="right:713px;top:17px;"><span style="font-size:17px;letter-spacing:-0.72px;margin-right:0.72px;">12,100</span></div><div class="t" style="right:600px;top:17px;"><span style="font-size:17px;letter-spacing:0.19px;margin-right:-0.19px;">24</span></div><div class="t" style="right:529.5px;top:17px;"><span style="font-size:17px;letter-spacing:0.19px;margin-right:-0.19px;">24</span></div><div class="dot" style="left:772.3px;background:#59ddaa"></div><div class="t" style="right:435.5px;top:17px;"><span style="font-size:17px;letter-spacing:0.19px;margin-right:-0.19px;">59</span></div><div class="dot" style="left:866.5px;background:#fb7b37"></div><div class="t" style="right:311.5px;top:17px;"><span style="font-size:17px;letter-spacing:0.24px;margin-right:-0.24px;">0.82</span></div><div class="t" style="right:244.5px;top:17px;"><span style="font-size:17px;letter-spacing:-0.57px;margin-right:0.57px;">1.00</span></div><div style="left:1067px;top:18.500px"><svg width="19" height="16" viewBox="0 0 19 16"><path d="M7.500 13.800 H1.500 V1.500 H16.500 V5" fill="none" stroke="#a3a6b1" stroke-width="1.900" stroke-linejoin="miter"/><path d="M0.600 1.700 H17.400" stroke="#a3a6b1" stroke-width="2.400"/><circle cx="12" cy="9.400" r="3" fill="none" stroke="#9a9da9" stroke-width="1.800"/><path d="M14.300 11.700 L17 14.500" stroke="#9a9da9" stroke-width="1.900" stroke-linecap="round"/></svg></div><div style="left:1095.3px;top:14.500px;width:1.200px;height:23px;background:#d1d4db"></div><div class="t" style="left:1106px;top:17.100px;color:#6c6e79"><span style="font-size:16px;letter-spacing:0.49px;margin-right:-0.49px;">6</span></div><div style="left:1106px;top:38.500px;width:10px;height:0;border-top:1.500px dashed #8a8e9b"></div><div class="t" style="left:1180.5px;top:16.800px"><span style="font-size:17px;letter-spacing:0.16px;margin-right:-0.16px;">3 weeks</span></div><div style="left:1249.3px;top:16.300px"><svg width="19" height="19" viewBox="0 0 24 24" fill="none" stroke="#0a6cc9" stroke-width="2.800" stroke-linecap="round" stroke-linejoin="round"><path d="M22.500 3.500 V10.300 H15.700"/><path d="M20.300 15.200 A9 9 0 1 1 18.200 5.800 L22.500 10.300"/></svg></div></div>
<div class="row" style="top:539.5px"><div class="cb" style="left:23.500px;top:16.700px"></div><div style="left:61.300px;top:16.600px"><svg width="19" height="19" viewBox="0 0 19 19"><circle cx="9.500" cy="9.500" r="8.400" fill="none" stroke="#8b8e9a" stroke-width="1.900"/><path d="M9.500 5.300v8.400M5.300 9.500h8.400" stroke="#8b8e9a" stroke-width="1.900" stroke-linecap="round"/></svg></div><div class="t" style="left:85.500px;top:17.100px;color:#0a6cc9"><span style="font-size:17px;letter-spacing:0.35px;margin-right:-0.35px;-webkit-text-stroke:0.150px #0a6cc9;">toy of dog</span></div><div style="left:170.29999999999998px;top:19.300px"><svg width="15" height="14" viewBox="0 0 15 14"><rect x="0.900" y="0.900" width="13.200" height="12.200" rx="0.400" fill="none" stroke="#9295a1" stroke-width="1.800"/><path d="M1 5.700h13" stroke="#9295a1" stroke-width="1.700"/><path d="M11 1v4.500" stroke="#9295a1" stroke-width="1.500"/></svg></div><div class="bdg bI" style="left:396px">I</div><div class="bdg bT" style="left:419.3px">T</div><div class="t" style="right:713px;top:17px;"><span style="font-size:17px;letter-spacing:-0.72px;margin-right:0.72px;">12,100</span></div><div class="t" style="right:600px;top:17px;"><span style="font-size:17px;letter-spacing:0.19px;margin-right:-0.19px;">24</span></div><div class="t" style="right:529.5px;top:17px;"><span style="font-size:17px;letter-spacing:0.19px;margin-right:-0.19px;">23</span></div><div class="dot" style="left:772.3px;background:#59ddaa"></div><div class="t" style="right:435.5px;top:17px;"><span style="font-size:17px;letter-spacing:0.19px;margin-right:-0.19px;">43</span></div><div class="dot" style="left:866.5px;background:#fdc23c"></div><div class="t" style="right:311.5px;top:17px;"><span style="font-size:17px;letter-spacing:0.24px;margin-right:-0.24px;">0.82</span></div><div class="t" style="right:244.5px;top:17px;"><span style="font-size:17px;letter-spacing:-0.57px;margin-right:0.57px;">1.00</span></div><div style="left:1067px;top:18.500px"><svg width="19" height="16" viewBox="0 0 19 16"><path d="M7.500 13.800 H1.500 V1.500 H16.500 V5" fill="none" stroke="#a3a6b1" stroke-width="1.900" stroke-linejoin="miter"/><path d="M0.600 1.700 H17.400" stroke="#a3a6b1" stroke-width="2.400"/><circle cx="12" cy="9.400" r="3" fill="none" stroke="#9a9da9" stroke-width="1.800"/><path d="M14.300 11.700 L17 14.500" stroke="#9a9da9" stroke-width="1.900" stroke-linecap="round"/></svg></div><div style="left:1095.3px;top:14.500px;width:1.200px;height:23px;background:#d1d4db"></div><div class="t" style="left:1106px;top:17.100px;color:#6c6e79"><span style="font-size:16px;letter-spacing:0.49px;margin-right:-0.49px;">7</span></div><div style="left:1106px;top:38.500px;width:10px;height:0;border-top:1.500px dashed #8a8e9b"></div><div class="t" style="left:1180.5px;top:16.800px"><span style="font-size:17px;letter-spacing:0.16px;margin-right:-0.16px;">3 weeks</span></div><div style="left:1249.3px;top:16.300px"><svg width="19" height="19" viewBox="0 0 24 24" fill="none" stroke="#0a6cc9" stroke-width="2.800" stroke-linecap="round" stroke-linejoin="round"><path d="M22.500 3.500 V10.300 H15.700"/><path d="M20.300 15.200 A9 9 0 1 1 18.200 5.800 L22.500 10.300"/></svg></div></div>
<div class="row" style="top:591.6px"><div class="cb" style="left:23.500px;top:16.700px"></div><div style="left:61.300px;top:16.600px"><svg width="19" height="19" viewBox="0 0 19 19"><circle cx="9.500" cy="9.500" r="8.400" fill="none" stroke="#8b8e9a" stroke-width="1.900"/><path d="M9.500 5.300v8.400M5.300 9.500h8.400" stroke="#8b8e9a" stroke-width="1.900" stroke-linecap="round"/></svg></div><div class="t" style="left:85.500px;top:17.100px;color:#0a6cc9"><span style="font-size:17px;letter-spacing:0.20px;margin-right:-0.20px;-webkit-text-stroke:0.150px #0a6cc9;">dog man toys</span></div><div style="left:196.6px;top:19.300px"><svg width="15" height="14" viewBox="0 0 15 14"><rect x="0.900" y="0.900" width="13.200" height="12.200" rx="0.400" fill="none" stroke="#9295a1" stroke-width="1.800"/><path d="M1 5.700h13" stroke="#9295a1" stroke-width="1.700"/><path d="M11 1v4.500" stroke="#9295a1" stroke-width="1.500"/></svg></div><div class="bdg bI" style="left:396px">I</div><div class="bdg bC" style="left:419.3px">C</div><div class="t" style="right:713px;top:17px;"><span style="font-size:17px;letter-spacing:-0.34px;margin-right:0.34px;">8,100</span></div><div class="t" style="right:600px;top:17px;"><span style="font-size:17px;letter-spacing:-1.44px;margin-right:1.44px;">16</span></div><div class="t" style="right:529.5px;top:17px;"><span style="font-size:17px;letter-spacing:0.19px;margin-right:-0.19px;">30</span></div><div class="dot" style="left:772.3px;background:#fdc23c"></div><div class="t" style="right:435.5px;top:17px;"><span style="font-size:17px;letter-spacing:0.19px;margin-right:-0.19px;">30</span></div><div class="dot" style="left:866.5px;background:#fdc23c"></div><div class="t" style="right:311.5px;top:17px;"><span style="font-size:17px;letter-spacing:0.24px;margin-right:-0.24px;">0.23</span></div><div class="t" style="right:244.5px;top:17px;"><span style="font-size:17px;letter-spacing:0.24px;margin-right:-0.24px;">0.96</span></div><div style="left:1067px;top:18.500px"><svg width="19" height="16" viewBox="0 0 19 16"><path d="M7.500 13.800 H1.500 V1.500 H16.500 V5" fill="none" stroke="#a3a6b1" stroke-width="1.900" stroke-linejoin="miter"/><path d="M0.600 1.700 H17.400" stroke="#a3a6b1" stroke-width="2.400"/><circle cx="12" cy="9.400" r="3" fill="none" stroke="#9a9da9" stroke-width="1.800"/><path d="M14.300 11.700 L17 14.500" stroke="#9a9da9" stroke-width="1.900" stroke-linecap="round"/></svg></div><div style="left:1095.3px;top:14.500px;width:1.200px;height:23px;background:#d1d4db"></div><div class="t" style="left:1106px;top:17.100px;color:#6c6e79"><span style="font-size:16px;letter-spacing:0.49px;margin-right:-0.49px;">5</span></div><div style="left:1106px;top:38.500px;width:10px;height:0;border-top:1.500px dashed #8a8e9b"></div><div class="t" style="left:1180.5px;top:16.800px"><span style="font-size:17px;letter-spacing:0.16px;margin-right:-0.16px;">3 weeks</span></div><div style="left:1249.3px;top:16.300px"><svg width="19" height="19" viewBox="0 0 24 24" fill="none" stroke="#0a6cc9" stroke-width="2.800" stroke-linecap="round" stroke-linejoin="round"><path d="M22.500 3.500 V10.300 H15.700"/><path d="M20.300 15.200 A9 9 0 1 1 18.200 5.800 L22.500 10.300"/></svg></div></div>
<div class="row" style="top:643.6px"><div class="cb" style="left:23.500px;top:16.700px"></div><div style="left:61.300px;top:16.600px"><svg width="19" height="19" viewBox="0 0 19 19"><circle cx="9.500" cy="9.500" r="8.400" fill="none" stroke="#8b8e9a" stroke-width="1.900"/><path d="M9.500 5.300v8.400M5.300 9.500h8.400" stroke="#8b8e9a" stroke-width="1.900" stroke-linecap="round"/></svg></div><div class="t" style="left:85.500px;top:17.100px;color:#0a6cc9"><span style="font-size:17px;letter-spacing:0.32px;margin-right:-0.32px;-webkit-text-stroke:0.150px #0a6cc9;">robot dog toy</span></div><div style="left:195.5px;top:19.300px"><svg width="15" height="14" viewBox="0 0 15 14"><rect x="0.900" y="0.900" width="13.200" height="12.200" rx="0.400" fill="none" stroke="#9295a1" stroke-width="1.800"/><path d="M1 5.700h13" stroke="#9295a1" stroke-width="1.700"/><path d="M11 1v4.500" stroke="#9295a1" stroke-width="1.500"/></svg></div><div class="bdg bI" style="left:396px">I</div><div class="bdg bT" style="left:419.3px">T</div><div class="t" style="right:713px;top:17px;"><span style="font-size:17px;letter-spacing:-0.34px;margin-right:0.34px;">8,100</span></div><div class="t" style="right:600px;top:17px;"><span style="font-size:17px;letter-spacing:-1.44px;margin-right:1.44px;">16</span></div><div class="t" style="right:529.5px;top:17px;"><span style="font-size:17px;letter-spacing:0.19px;margin-right:-0.19px;">29</span></div><div class="dot" style="left:772.3px;background:#59ddaa"></div><div class="t" style="right:435.5px;top:17px;"><span style="font-size:17px;letter-spacing:0.19px;margin-right:-0.19px;">34</span></div><div class="dot" style="left:866.5px;background:#fdc23c"></div><div class="t" style="right:311.5px;top:17px;"><span style="font-size:17px;letter-spacing:0.24px;margin-right:-0.24px;">0.46</span></div><div class="t" style="right:244.5px;top:17px;"><span style="font-size:17px;letter-spacing:-0.57px;margin-right:0.57px;">1.00</span></div><div style="left:1067px;top:18.500px"><svg width="19" height="16" viewBox="0 0 19 16"><path d="M7.500 13.800 H1.500 V1.500 H16.500 V5" fill="none" stroke="#a3a6b1" stroke-width="1.900" stroke-linejoin="miter"/><path d="M0.600 1.700 H17.400" stroke="#a3a6b1" stroke-width="2.400"/><circle cx="12" cy="9.400" r="3" fill="none" stroke="#9a9da9" stroke-width="1.800"/><path d="M14.300 11.700 L17 14.500" stroke="#9a9da9" stroke-width="1.900" stroke-linecap="round"/></svg></div><div style="left:1095.3px;top:14.500px;width:1.200px;height:23px;background:#d1d4db"></div><div class="t" style="left:1106px;top:17.100px;color:#6c6e79"><span style="font-size:16px;letter-spacing:0.49px;margin-right:-0.49px;">7</span></div><div style="left:1106px;top:38.500px;width:10px;height:0;border-top:1.500px dashed #8a8e9b"></div><div class="t" style="left:1180.5px;top:16.800px"><span style="font-size:17px;letter-spacing:0.16px;margin-right:-0.16px;">3 weeks</span></div><div style="left:1249.3px;top:16.300px"><svg width="19" height="19" viewBox="0 0 24 24" fill="none" stroke="#0a6cc9" stroke-width="2.800" stroke-linecap="round" stroke-linejoin="round"><path d="M22.500 3.500 V10.300 H15.700"/><path d="M20.300 15.200 A9 9 0 1 1 18.200 5.800 L22.500 10.300"/></svg></div></div>
<div class="row" style="top:695.6px"><div class="cb" style="left:23.500px;top:16.700px"></div><div style="left:61.300px;top:16.600px"><svg width="19" height="19" viewBox="0 0 19 19"><circle cx="9.500" cy="9.500" r="8.400" fill="none" stroke="#8b8e9a" stroke-width="1.900"/><path d="M9.500 5.300v8.400M5.300 9.500h8.400" stroke="#8b8e9a" stroke-width="1.900" stroke-linecap="round"/></svg></div><div class="t" style="left:85.500px;top:17.100px;color:#0a6cc9"><span style="font-size:17px;letter-spacing:0.14px;margin-right:-0.14px;-webkit-text-stroke:0.150px #0a6cc9;">dog. man. toy</span></div><div style="left:197.0px;top:19.300px"><svg width="15" height="14" viewBox="0 0 15 14"><rect x="0.900" y="0.900" width="13.200" height="12.200" rx="0.400" fill="none" stroke="#9295a1" stroke-width="1.800"/><path d="M1 5.700h13" stroke="#9295a1" stroke-width="1.700"/><path d="M11 1v4.500" stroke="#9295a1" stroke-width="1.500"/></svg></div><div class="bdg bI" style="left:396px">I</div><div class="bdg bT" style="left:419.3px">T</div><div class="t" style="right:713px;top:17px;"><span style="font-size:17px;letter-spacing:0.31px;margin-right:-0.31px;">6,600</span></div><div class="t" style="right:600px;top:17px;"><span style="font-size:17px;letter-spacing:-1.44px;margin-right:1.44px;">13</span></div><div class="t" style="right:529.5px;top:17px;"><span style="font-size:17px;letter-spacing:0.19px;margin-right:-0.19px;">20</span></div><div class="dot" style="left:772.3px;background:#59ddaa"></div><div class="t" style="right:435.5px;top:17px;"><span style="font-size:17px;letter-spacing:0.19px;margin-right:-0.19px;">33</span></div><div class="dot" style="left:866.5px;background:#fdc23c"></div><div class="t" style="right:311.5px;top:17px;"><span style="font-size:17px;letter-spacing:0.24px;margin-right:-0.24px;">0.00</span></div><div class="t" style="right:244.5px;top:17px;"><span style="font-size:17px;letter-spacing:0.24px;margin-right:-0.24px;">0.00</span></div><div style="left:1067px;top:18.500px"><svg width="19" height="16" viewBox="0 0 19 16"><path d="M7.500 13.800 H1.500 V1.500 H16.500 V5" fill="none" stroke="#a3a6b1" stroke-width="1.900" stroke-linejoin="miter"/><path d="M0.600 1.700 H17.400" stroke="#a3a6b1" stroke-width="2.400"/><circle cx="12" cy="9.400" r="3" fill="none" stroke="#9a9da9" stroke-width="1.800"/><path d="M14.300 11.700 L17 14.500" stroke="#9a9da9" stroke-width="1.900" stroke-linecap="round"/></svg></div><div style="left:1095.3px;top:14.500px;width:1.200px;height:23px;background:#d1d4db"></div><div class="t" style="left:1106px;top:17.100px;color:#6c6e79"><span style="font-size:16px;letter-spacing:0.49px;margin-right:-0.49px;">5</span></div><div style="left:1106px;top:38.500px;width:10px;height:0;border-top:1.500px dashed #8a8e9b"></div><div class="t" style="left:1180.5px;top:16.800px"><span style="font-size:17px;letter-spacing:0.16px;margin-right:-0.16px;">3 weeks</span></div><div style="left:1249.3px;top:16.300px"><svg width="19" height="19" viewBox="0 0 24 24" fill="none" stroke="#0a6cc9" stroke-width="2.800" stroke-linecap="round" stroke-linejoin="round"><path d="M22.500 3.500 V10.300 H15.700"/><path d="M20.300 15.200 A9 9 0 1 1 18.200 5.800 L22.500 10.300"/></svg></div></div>
<div class="row" style="top:747.7px"><div class="cb" style="left:23.500px;top:16.700px"></div><div style="left:61.300px;top:16.600px"><svg width="19" height="19" viewBox="0 0 19 19"><circle cx="9.500" cy="9.500" r="8.400" fill="none" stroke="#8b8e9a" stroke-width="1.900"/><path d="M9.500 5.300v8.400M5.300 9.500h8.400" stroke="#8b8e9a" stroke-width="1.900" stroke-linecap="round"/></svg></div><div class="t" style="left:85.500px;top:17.100px;color:#0a6cc9"><span style="font-size:17px;letter-spacing:0.25px;margin-right:-0.25px;-webkit-text-stroke:0.150px #0a6cc9;">toy dog breeds</span></div><div style="left:208.1px;top:19.300px"><svg width="15" height="14" viewBox="0 0 15 14"><rect x="0.900" y="0.900" width="13.200" height="12.200" rx="0.400" fill="none" stroke="#9295a1" stroke-width="1.800"/><path d="M1 5.700h13" stroke="#9295a1" stroke-width="1.700"/><path d="M11 1v4.500" stroke="#9295a1" stroke-width="1.500"/></svg></div><div class="tag" style="left:232.0px;width:40.5px"></div><div class="t" style="left:242.5px;top:17px;color:#0a62c0"><span style="font-size:15px;letter-spacing:0.66px;margin-right:-0.66px;-webkit-text-stroke:0.350px #0a62c0;">#</span><span style="display:inline-block;width:2.500px"></span><span style="font-size:15px;letter-spacing:0.16px;margin-right:-0.16px;-webkit-text-stroke:0.350px #0a62c0;">5</span></div><div class="bdg bI" style="left:396px">I</div><div class="t" style="right:713px;top:17px;"><span style="font-size:17px;letter-spacing:0.31px;margin-right:-0.31px;">6,600</span></div><div class="t" style="right:600px;top:17px;"><span style="font-size:17px;letter-spacing:0.33px;margin-right:-0.33px;">405</span></div><div class="t" style="right:529.5px;top:17px;"><span style="font-size:17px;letter-spacing:-0.22px;margin-right:0.22px;">0</span></div><div class="dot" style="left:772.3px;background:#009f81"></div><div class="t" style="right:435.5px;top:17px;"><span style="font-size:17px;letter-spacing:0.19px;margin-right:-0.19px;">69</span></div><div class="dot" style="left:866.5px;background:#fb7b37"></div><div class="t" style="right:311.5px;top:17px;"><span style="font-size:17px;letter-spacing:-0.57px;margin-right:0.57px;">0.15</span></div><div class="t" style="right:244.5px;top:17px;"><span style="font-size:17px;letter-spacing:0.24px;margin-right:-0.24px;">0.20</span></div><div style="left:1067px;top:18.500px"><svg width="19" height="16" viewBox="0 0 19 16"><path d="M7.500 13.800 H1.500 V1.500 H16.500 V5" fill="none" stroke="#a3a6b1" stroke-width="1.900" stroke-linejoin="miter"/><path d="M0.600 1.700 H17.400" stroke="#a3a6b1" stroke-width="2.400"/><circle cx="12" cy="9.400" r="3" fill="none" stroke="#9a9da9" stroke-width="1.800"/><path d="M14.300 11.700 L17 14.500" stroke="#9a9da9" stroke-width="1.900" stroke-linecap="round"/></svg></div><div style="left:1095.3px;top:14.500px;width:1.200px;height:23px;background:#d1d4db"></div><div class="t" style="left:1106px;top:17.100px;color:#6c6e79"><span style="font-size:16px;letter-spacing:0.49px;margin-right:-0.49px;">9</span></div><div style="left:1106px;top:38.500px;width:10px;height:0;border-top:1.500px dashed #8a8e9b"></div><div class="t" style="left:1180.5px;top:16.800px"><span style="font-size:17px;letter-spacing:0.16px;margin-right:-0.16px;">3 weeks</span></div><div style="left:1249.3px;top:16.300px"><svg width="19" height="19" viewBox="0 0 24 24" fill="none" stroke="#0a6cc9" stroke-width="2.800" stroke-linecap="round" stroke-linejoin="round"><path d="M22.500 3.500 V10.300 H15.700"/><path d="M20.300 15.200 A9 9 0 1 1 18.200 5.800 L22.500 10.300"/></svg></div></div>
<div class="row" style="top:799.7px"><div class="cb" style="left:23.500px;top:16.700px"></div><div style="left:61.300px;top:16.600px"><svg width="19" height="19" viewBox="0 0 19 19"><circle cx="9.500" cy="9.500" r="8.400" fill="none" stroke="#8b8e9a" stroke-width="1.900"/><path d="M9.500 5.300v8.400M5.300 9.500h8.400" stroke="#8b8e9a" stroke-width="1.900" stroke-linecap="round"/></svg></div><div class="t" style="left:85.500px;top:17.100px;color:#0a6cc9"><span style="font-size:17px;letter-spacing:0.26px;margin-right:-0.26px;-webkit-text-stroke:0.150px #0a6cc9;">dog toy box</span></div><div style="left:182.9px;top:19.300px"><svg width="15" height="14" viewBox="0 0 15 14"><rect x="0.900" y="0.900" width="13.200" height="12.200" rx="0.400" fill="none" stroke="#9295a1" stroke-width="1.800"/><path d="M1 5.700h13" stroke="#9295a1" stroke-width="1.700"/><path d="M11 1v4.500" stroke="#9295a1" stroke-width="1.500"/></svg></div><div class="bdg bI" style="left:396px">I</div><div class="bdg bT" style="left:419.3px">T</div><div class="t" style="right:713px;top:17px;"><span style="font-size:17px;letter-spacing:0.31px;margin-right:-0.31px;">5,400</span></div><div class="t" style="right:600px;top:17px;"><span style="font-size:17px;letter-spacing:-2.13px;margin-right:2.13px;">11</span></div><div class="t" style="right:529.5px;top:17px;"><span style="font-size:17px;letter-spacing:-1.44px;margin-right:1.44px;">19</span></div><div class="dot" style="left:772.3px;background:#59ddaa"></div><div class="t" style="right:435.5px;top:17px;"><span style="font-size:17px;letter-spacing:0.19px;margin-right:-0.19px;">24</span></div><div class="dot" style="left:866.5px;background:#59ddaa"></div><div class="t" style="right:311.5px;top:17px;"><span style="font-size:17px;letter-spacing:-0.57px;margin-right:0.57px;">1.26</span></div><div class="t" style="right:244.5px;top:17px;"><span style="font-size:17px;letter-spacing:-0.57px;margin-right:0.57px;">1.00</span></div><div style="left:1067px;top:18.500px"><svg width="19" height="16" viewBox="0 0 19 16"><path d="M7.500 13.800 H1.500 V1.500 H16.500 V5" fill="none" stroke="#a3a6b1" stroke-width="1.900" stroke-linejoin="miter"/><path d="M0.600 1.700 H17.400" stroke="#a3a6b1" stroke-width="2.400"/><circle cx="12" cy="9.400" r="3" fill="none" stroke="#9a9da9" stroke-width="1.800"/><path d="M14.300 11.700 L17 14.500" stroke="#9a9da9" stroke-width="1.900" stroke-linecap="round"/></svg></div><div style="left:1095.3px;top:14.500px;width:1.200px;height:23px;background:#d1d4db"></div><div class="t" style="left:1106px;top:17.100px;color:#6c6e79"><span style="font-size:16px;letter-spacing:0.49px;margin-right:-0.49px;">5</span></div><div style="left:1106px;top:38.500px;width:10px;height:0;border-top:1.500px dashed #8a8e9b"></div><div class="t" style="left:1180.5px;top:16.800px"><span style="font-size:17px;letter-spacing:0.16px;margin-right:-0.16px;">3 weeks</span></div><div style="left:1249.3px;top:16.300px"><svg width="19" height="19" viewBox="0 0 24 24" fill="none" stroke="#0a6cc9" stroke-width="2.800" stroke-linecap="round" stroke-linejoin="round"><path d="M22.500 3.500 V10.300 H15.700"/><path d="M20.300 15.200 A9 9 0 1 1 18.200 5.800 L22.500 10.300"/></svg></div></div>
<div class="row" style="top:851.8px"><div class="cb" style="left:23.500px;top:16.700px"></div><div style="left:61.300px;top:16.600px"><svg width="19" height="19" viewBox="0 0 19 19"><circle cx="9.500" cy="9.500" r="8.400" fill="none" stroke="#8b8e9a" stroke-width="1.900"/><path d="M9.500 5.300v8.400M5.300 9.500h8.400" stroke="#8b8e9a" stroke-width="1.900" stroke-linecap="round"/></svg></div><div class="t" style="left:85.500px;top:17.100px;color:#0a6cc9"><span style="font-size:17px;letter-spacing:0.29px;margin-right:-0.29px;-webkit-text-stroke:0.150px #0a6cc9;">dog toys for aggressive chewers</span></div><div style="left:344.90000000000003px;top:19.300px"><svg width="15" height="14" viewBox="0 0 15 14"><rect x="0.900" y="0.900" width="13.200" height="12.200" rx="0.400" fill="none" stroke="#9295a1" stroke-width="1.800"/><path d="M1 5.700h13" stroke="#9295a1" stroke-width="1.700"/><path d="M11 1v4.500" stroke="#9295a1" stroke-width="1.500"/></svg></div><div class="bdg bI" style="left:396px">I</div><div class="bdg bC" style="left:419.3px">C</div><div class="t" style="right:713px;top:17px;"><span style="font-size:17px;letter-spacing:0.31px;margin-right:-0.31px;">5,400</span></div><div class="t" style="right:600px;top:17px;"><span style="font-size:17px;letter-spacing:-1.44px;margin-right:1.44px;">10</span></div><div class="t" style="right:529.5px;top:17px;"><span style="font-size:17px;letter-spacing:0.19px;margin-right:-0.19px;">26</span></div><div class="dot" style="left:772.3px;background:#59ddaa"></div><div class="t" style="right:435.5px;top:17px;"><span style="font-size:17px;letter-spacing:0.19px;margin-right:-0.19px;">40</span></div><div class="dot" style="left:866.5px;background:#fdc23c"></div><div class="t" style="right:311.5px;top:17px;"><span style="font-size:17px;letter-spacing:0.24px;margin-right:-0.24px;">0.95</span></div><div class="t" style="right:244.5px;top:17px;"><span style="font-size:17px;letter-spacing:-0.57px;margin-right:0.57px;">1.00</span></div><div style="left:1067px;top:18.500px"><svg width="19" height="16" viewBox="0 0 19 16"><path d="M7.500 13.800 H1.500 V1.500 H16.500 V5" fill="none" stroke="#a3a6b1" stroke-width="1.900" stroke-linejoin="miter"/><path d="M0.600 1.700 H17.400" stroke="#a3a6b1" stroke-width="2.400"/><circle cx="12" cy="9.400" r="3" fill="none" stroke="#9a9da9" stroke-width="1.800"/><path d="M14.300 11.700 L17 14.500" stroke="#9a9da9" stroke-width="1.900" stroke-linecap="round"/></svg></div><div style="left:1095.3px;top:14.500px;width:1.200px;height:23px;background:#d1d4db"></div><div class="t" style="left:1106px;top:17.100px;color:#6c6e79"><span style="font-size:16px;letter-spacing:0.49px;margin-right:-0.49px;">8</span></div><div style="left:1106px;top:38.500px;width:10px;height:0;border-top:1.500px dashed #8a8e9b"></div><div class="t" style="left:1180.5px;top:16.800px"><span style="font-size:17px;letter-spacing:0.16px;margin-right:-0.16px;">3 weeks</span></div><div style="left:1249.3px;top:16.300px"><svg width="19" height="19" viewBox="0 0 24 24" fill="none" stroke="#0a6cc9" stroke-width="2.800" stroke-linecap="round" stroke-linejoin="round"><path d="M22.500 3.500 V10.300 H15.700"/><path d="M20.300 15.200 A9 9 0 1 1 18.200 5.800 L22.500 10.300"/></svg></div></div>
<div class="row" style="top:903.8px"><div class="cb" style="left:23.500px;top:16.700px"></div><div style="left:61.300px;top:16.600px"><svg width="19" height="19" viewBox="0 0 19 19"><circle cx="9.500" cy="9.500" r="8.400" fill="none" stroke="#8b8e9a" stroke-width="1.900"/><path d="M9.500 5.300v8.400M5.300 9.500h8.400" stroke="#8b8e9a" stroke-width="1.900" stroke-linecap="round"/></svg></div><div class="t" style="left:85.500px;top:17.100px;color:#0a6cc9"><span style="font-size:17px;letter-spacing:0.35px;margin-right:-0.35px;-webkit-text-stroke:0.150px #0a6cc9;">kinds of toy dogs</span></div><div style="left:225.6px;top:19.300px"><svg width="15" height="14" viewBox="0 0 15 14"><rect x="0.900" y="0.900" width="13.200" height="12.200" rx="0.400" fill="none" stroke="#9295a1" stroke-width="1.800"/><path d="M1 5.700h13" stroke="#9295a1" stroke-width="1.700"/><path d="M11 1v4.500" stroke="#9295a1" stroke-width="1.500"/></svg></div><div class="tag" style="left:249.5px;width:40.5px"></div><div class="t" style="left:260.0px;top:17px;color:#0a62c0"><span style="font-size:15px;letter-spacing:0.66px;margin-right:-0.66px;-webkit-text-stroke:0.350px #0a62c0;">#</span><span style="display:inline-block;width:2.500px"></span><span style="font-size:15px;letter-spacing:0.16px;margin-right:-0.16px;-webkit-text-stroke:0.350px #0a62c0;">7</span></div><div class="bdg bI" style="left:396px">I</div><div class="t" style="right:713px;top:17px;"><span style="font-size:17px;letter-spacing:0.31px;margin-right:-0.31px;">5,400</span></div><div class="t" style="right:600px;top:17px;"><span style="font-size:17px;letter-spacing:0.33px;margin-right:-0.33px;">222</span></div><div class="t" style="right:529.5px;top:17px;"><span style="font-size:17px;letter-spacing:-0.22px;margin-right:0.22px;">0</span></div><div class="dot" style="left:772.3px;background:#009f81"></div><div class="t" style="right:435.5px;top:17px;"><span style="font-size:17px;letter-spacing:0.19px;margin-right:-0.19px;">65</span></div><div class="dot" style="left:866.5px;background:#fb7b37"></div><div class="t" style="right:311.5px;top:17px;"><span style="font-size:17px;letter-spacing:-0.57px;margin-right:0.57px;">0.15</span></div><div class="t" style="right:244.5px;top:17px;"><span style="font-size:17px;letter-spacing:0.24px;margin-right:-0.24px;">0.20</span></div><div style="left:1067px;top:18.500px"><svg width="19" height="16" viewBox="0 0 19 16"><path d="M7.500 13.800 H1.500 V1.500 H16.500 V5" fill="none" stroke="#a3a6b1" stroke-width="1.900" stroke-linejoin="miter"/><path d="M0.600 1.700 H17.400" stroke="#a3a6b1" stroke-width="2.400"/><circle cx="12" cy="9.400" r="3" fill="none" stroke="#9a9da9" stroke-width="1.800"/><path d="M14.300 11.700 L17 14.500" stroke="#9a9da9" stroke-width="1.900" stroke-linecap="round"/></svg></div><div style="left:1095.3px;top:14.500px;width:1.200px;height:23px;background:#d1d4db"></div><div class="t" style="left:1106px;top:17.100px;color:#6c6e79"><span style="font-size:16px;letter-spacing:0.49px;margin-right:-0.49px;">8</span></div><div style="left:1106px;top:38.500px;width:10px;height:0;border-top:1.500px dashed #8a8e9b"></div><div class="t" style="left:1180.5px;top:16.800px"><span style="font-size:17px;letter-spacing:0.16px;margin-right:-0.16px;">3 weeks</span></div><div style="left:1249.3px;top:16.300px"><svg width="19" height="19" viewBox="0 0 24 24" fill="none" stroke="#0a6cc9" stroke-width="2.800" stroke-linecap="round" stroke-linejoin="round"><path d="M22.500 3.500 V10.300 H15.700"/><path d="M20.300 15.200 A9 9 0 1 1 18.200 5.800 L22.500 10.300"/></svg></div></div>
<div class="hl" style="left:278px;top:382px;width:1294.500px;height:215px"></div>
<div class="hl" style="left:278px;top:639px;width:1294.500px;height:58.500px"></div>
<div id="fade" class="abs"></div>
</body></html>
